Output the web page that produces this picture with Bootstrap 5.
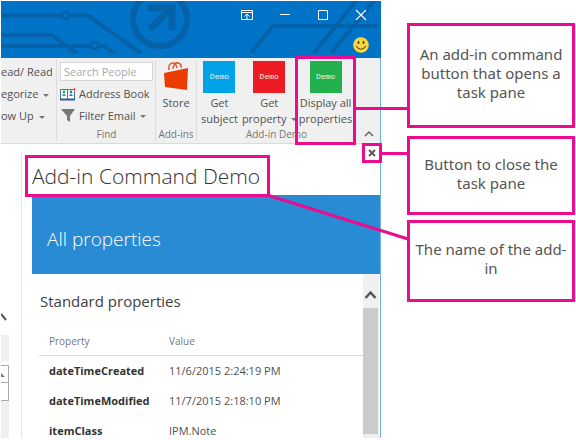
<!DOCTYPE html>
<html lang="en">
<head>
<meta charset="utf-8">
<meta name="viewport" content="width=device-width, initial-scale=1">
<title>Add-in Command Demo</title>
<link href="https://cdn.jsdelivr.net/npm/bootstrap@5.3.0/dist/css/bootstrap.min.css" rel="stylesheet">
<style>
  :root { --pink: #ec0c8e; --blue: #0173c7; --ink: #505050; }
  body { font-family: "Open Sans", "Noto Sans", sans-serif; font-size: 11px; line-height: 16px; color: var(--ink); background: #fff; overflow: hidden; }
  button { font: inherit; color: inherit; background: none; border: 0; padding: 0; }
  svg { display: block; flex: none; }

  .app-window { min-width: 0; margin: 1px 0 0 1px; }
  .title-bar { background: var(--blue); height: 57px; }
  .circuit { position: absolute; top: 0; left: 0; }
  .circuit-right { position: absolute; top: 0; right: 0; }
  .caption-buttons { gap: 24px; padding: 7px 13px 0 0; }
  .smiley { padding: 15px 12px 0 0; }
  .caption-buttons button { width: 14px; height: 14px; }

  .app-frame { border-right: 1px solid #6cb2e4; }
  .ribbon { background: #f0f0f0; border-bottom: 1px solid #dadada; height: 86px; }
  .ribbon-group { border-right: 1px solid #dcdcdc; padding-top: 1px; margin-top: 2px; margin-bottom: 2px; }
  .group-label { font-size: 10px; line-height: 14px; color: #777; text-align: center; }
  .tags-group { width: 56px; overflow: hidden; white-space: nowrap; padding-top: 4px; }
  .find-group { width: 99px; padding-left: 3px; padding-right: 2px; padding-top: 2px; }
  .store-group { width: 41px; }
  .ribbon-row { height: 22px; white-space: nowrap; }
  .search-people { font-size: 11px; line-height: 16px; width: 100%; height: 19px; margin-bottom: 2px; padding: 0 3px; border: 1px solid #d5d5d5; background: #fff; color: var(--ink); }
  .search-people::placeholder { color: #aaa; opacity: 1; }
  .search-people:focus { outline: 1px solid var(--blue); }
  .caret { width: 0; height: 0; border: 3px solid transparent; border-top-color: #777; border-bottom: 0; margin-left: 5px; }
  .big-button { white-space: nowrap; text-align: center; line-height: 16px; }
  .demo-tile { width: 32px; height: 32px; color: #e6f5ee; font: 8px/31px "Liberation Mono", monospace; text-align: center; margin-bottom: 2px; }
  .tile-cyan { background: #00a2e8; }
  .tile-red { background: #ed1c24; }
  .tile-green { background: #22b14c; }
  .marked-command { position: absolute; right: 24px; top: -2px; z-index: 2; width: 61px; height: 89px; border: 3px solid var(--pink); padding-top: 2px; }
  .collapse-ribbon { position: absolute; right: 6px; bottom: 5px; }

  .side-strip { width: 21px; border-right: 1px solid #e3e3e3; margin-top: 8px; padding-top: 161px; }
  .strip-block { width: 8px; height: 26px; background: #f0f0f0; margin-top: 14px; margin-bottom: 4px; }
  .strip-cell { width: 8px; height: 18px; border: 1px solid #aaa; border-left: 0; background: #fff; }
  .strip-cell + .strip-cell { border-top: 0; }
  .strip-track { width: 8px; background: #f0f0f0; }

  .pane-head { height: 51px; padding: 11px 0 0 3px; }
  .pane-title { font-size: 21px; line-height: 30px; font-weight: 300; color: #333; width: 245px; height: 42px; border: 3px solid var(--pink); padding: 3px 0 0 4px; margin: 0; white-space: nowrap; position: relative; z-index: 2; }
  .pane-close { position: absolute; right: -2px; top: -1px; z-index: 2; width: 20px; height: 20px; border: 3px solid var(--pink); background: #fff; }
  .banner { background: #298bd3; color: #fff; font-size: 19px; line-height: 28px; font-weight: 300; padding: 30px 15px 21px; margin: 0 0 0 10px; }
  .section-title { font-size: 15px; line-height: 24px; font-weight: 400; color: #404040; margin: 0; padding: 15px 0 16px 1px; }
  .pane-content { padding-left: 17px; }
  .prop-table { margin: 0; width: 100%; font-size: 11px; line-height: 14px; color: #505050; }
  .prop-table th, .prop-table td { padding: 8px 0 8px 10px; white-space: nowrap; }
  .prop-table thead th { font-size: 10px; font-weight: 400; color: #777; border-bottom: 1px solid #ddd; padding-top: 5px; padding-bottom: 7px; }
  .prop-table tbody th { font-weight: 700; color: #333; width: 120px; }
  .prop-table tbody tr:last-child > * { padding-bottom: 0; }
  .scroll-bar { width: 16px; background: #f0f0f0; padding: 16px 1px 4px 0; margin-right: 1px; }
  .scroll-thumb { background: #cbcbcb; width: 15px; margin-top: 9px; }

  .callouts { flex: 0 0 169px; margin-left: 26px; padding: 23px 1px 0 0; font-family: "Noto Sans", sans-serif; font-size: 15px; line-height: 19px; color: #555; text-align: center; }
  .callout-box { border: 3px solid var(--pink); background: #fff; padding: 0 3px 4px; }
  .callout-command { min-height: 105px; margin-bottom: 8px; }
  .callout-close { min-height: 79px; margin-bottom: 5px; }
  .callout-name { min-height: 82px; }
  .connectors { position: absolute; top: 0; left: 0; z-index: 3; pointer-events: none; }
</style>
</head>
<body>
<main class="d-flex position-relative">
  <section class="app-window flex-grow-1 d-flex flex-column">
    <header class="title-bar position-relative overflow-hidden">
      <svg class="circuit" width="200" height="52" fill="none" stroke="#0562a8" stroke-width="4">
        <path d="M0 14.500H60M69 14.500H87L141 53"/><circle cx="64.500" cy="14.500" r="3.500" stroke-width="3"/>
        <path d="M0 34H51L77 53M0 45H89M98 45H103L114 53"/><circle cx="93.500" cy="44.500" r="3.500" stroke-width="3"/>
        <circle cx="159" cy="18" r="27" stroke-width="6"/>
        <path d="M147 7H171V29M170 8L149 28" stroke-width="7"/>
      </svg>
      <svg class="circuit-right" width="132" height="52" fill="none" stroke="#0562a8" stroke-width="4">
        <path d="M2 52L24 25H128M65 52L107 0M82 52L125 0"/>
      </svg>
      <div class="caption-buttons d-flex justify-content-end position-relative">
        <button type="button" aria-label="Ribbon display options"><svg width="14" height="14" fill="none" stroke="#fff"><path d="M1.500 2.500H12.500V11.500H1.500ZM1.500 4.500H12.500M7 11V6M4.500 8.500L7 6L9.500 8.500"/></svg></button>
        <button type="button" aria-label="Minimize"><svg width="14" height="14" fill="none" stroke="#fff"><path d="M2 6.500H12"/></svg></button>
        <button type="button" aria-label="Maximize"><svg width="14" height="14" fill="none" stroke="#fff"><path d="M2.500 2.500H11.500V11.500H2.500Z"/></svg></button>
        <button type="button" aria-label="Close"><svg width="14" height="14" fill="none" stroke="#fff" stroke-width="1.200"><path d="M2 2L12 12M12 2L2 12"/></svg></button>
      </div>
      <div class="smiley d-flex justify-content-end position-relative">
        <button type="button" aria-label="Send feedback"><svg width="16" height="16"><circle cx="8" cy="8" r="7.800" fill="#ffd83d"/><ellipse cx="5.500" cy="5.500" rx="1" ry="1.700" fill="#5c4a12"/><ellipse cx="10.500" cy="5.500" rx="1" ry="1.700" fill="#5c4a12"/><path d="M3 9Q8 15.500 13 9" fill="none" stroke="#5c4a12" stroke-width="1.200"/></svg></button>
      </div>
    </header>

    <div class="app-frame flex-grow-1 d-flex flex-column">
      <div class="ribbon d-flex position-relative">
        <div class="ribbon-group tags-group">
          <button type="button" class="ribbon-row d-flex align-items-start">ead/ Read</button>
          <button type="button" class="ribbon-row d-flex align-items-start">egorize<span class="caret mt-2"></span></button>
          <button type="button" class="ribbon-row d-flex align-items-start">ow Up<span class="caret mt-2"></span></button>
        </div>
        <div class="ribbon-group find-group d-flex flex-column">
          <input type="text" class="search-people" placeholder="Search People" aria-label="Search People">
          <button type="button" class="ribbon-row d-flex align-items-center gap-1">
            <svg width="15" height="14"><path d="M.5 2.500H14.500V12.500H.5Z" fill="#fff" stroke="#3f78a8"/><path d="M0 12.500H15" stroke="#2c5f93" stroke-width="2"/><path d="M7.500 2V12" stroke="#3f78a8"/><circle cx="4" cy="5" r="1.400" fill="#3e9b6e"/><path d="M2 9Q4 5 6 9Z" fill="#3e9b6e"/><circle cx="11" cy="5" r="1.400" fill="#2b77b8"/><path d="M9 9Q11 5 13 9Z" fill="#2b77b8"/><path d="M14.500 1V5" stroke="#d9532c"/></svg>
            <span>Address Book</span>
          </button>
          <button type="button" class="ribbon-row d-flex align-items-center gap-1">
            <svg width="15" height="14"><path d="M1 0H15L10 7V13L7 11V7Z" fill="#777"/></svg>
            <span>Filter Email</span><span class="caret m-0"></span>
          </button>
          <div class="group-label mt-auto">Find</div>
        </div>
        <div class="ribbon-group store-group d-flex flex-column">
          <button type="button" class="big-button">
            <svg class="mx-auto mb-1" width="26" height="30"><path d="M6 9Q5 2 10 2Q13 2 14 7M10 8Q11 1 15 2Q19 3 18 7" fill="none" stroke="#e8542a" stroke-width="1.500"/><path d="M1 12L25 7L24 29L2 26Z" fill="#eb3c00"/></svg>
            Store
          </button>
          <div class="group-label mt-auto">Add-ins</div>
        </div>
        <div class="ribbon-group border-0 flex-grow-1 d-flex flex-column">
          <div class="d-flex">
            <button type="button" class="big-button mx-1"><span class="demo-tile tile-cyan d-block mx-auto">Demo</span>Get<br>subject</button>
            <button type="button" class="big-button"><span class="demo-tile tile-red d-block mx-auto">Demo</span>Get<br><span class="d-flex align-items-center">property<span class="caret ms-1"></span></span></button>
          </div>
          <div class="group-label mt-auto pe-4">Add-in Demo</div>
        </div>
        <button type="button" class="big-button marked-command d-flex flex-column align-items-center"><span class="demo-tile tile-green">Demo</span><span>Display all<br>properties</span></button>
        <button type="button" class="collapse-ribbon" aria-label="Collapse the ribbon"><svg width="10" height="8" fill="none" stroke="#666" stroke-width="1.500"><path d="M1 6L5 2L9 6"/></svg></button>
      </div>

      <div class="d-flex flex-grow-1">
        <div class="side-strip d-flex flex-column">
          <svg width="8" height="8" fill="none" stroke="#555" stroke-width="2"><path d="M0 1L5 7"/></svg>
          <div class="strip-block"></div>
          <div class="strip-cell"><svg width="6" height="14"><path d="M0 7L4 11H0Z" fill="#777"/></svg></div>
          <div class="strip-cell"></div>
          <div class="strip-track flex-grow-1"></div>
        </div>
        <section class="flex-grow-1 d-flex flex-column">
          <div class="pane-head position-relative">
            <h1 class="pane-title">Add-in Command Demo</h1>
            <button type="button" class="pane-close" aria-label="Close pane"><svg width="14" height="14" fill="none" stroke="#555" stroke-width="1.800"><path d="M4 4L10 10M10 4L4 10"/></svg></button>
          </div>
          <h2 class="banner">All properties</h2>
          <div class="d-flex flex-grow-1">
            <div class="pane-content flex-grow-1">
              <h3 class="section-title">Standard properties</h3>
              <table class="prop-table">
                <thead><tr><th scope="col">Property</th><th scope="col">Value</th></tr></thead>
                <tbody>
                  <tr><th scope="row">dateTimeCreated</th><td>11/6/2015 2:24:19 PM</td></tr>
                  <tr><th scope="row">dateTimeModified</th><td>11/7/2015 2:18:10 PM</td></tr>
                  <tr><th scope="row">itemClass</th><td>IPM.Note</td></tr>
                </tbody>
              </table>
            </div>
            <div class="scroll-bar d-flex flex-column align-items-center">
              <svg width="13" height="9" fill="none" stroke="#555" stroke-width="2.500"><path d="M1.500 8L6.500 2.500L11.500 8"/></svg>
              <div class="scroll-thumb flex-grow-1"></div>
            </div>
          </div>
        </section>
      </div>
    </div>
  </section>

  <aside class="callouts">
    <div class="callout-box callout-command d-flex align-items-center justify-content-center">An add-in command button that opens a task pane</div>
    <div class="callout-box callout-close d-flex align-items-center justify-content-center">Button to close the task pane</div>
    <div class="callout-box callout-name d-flex align-items-center justify-content-center">The name of the add-in</div>
  </aside>

  <svg class="connectors" width="410" height="245" fill="none" stroke="#ec0c8e" stroke-width="3" aria-hidden="true">
    <path d="M355 108.500H408M382 153.500H408M267 195L408 239"/>
  </svg>
</main>
<script src="https://cdn.jsdelivr.net/npm/bootstrap@5.3.0/dist/js/bootstrap.bundle.min.js"></script>
</body>
</html>
